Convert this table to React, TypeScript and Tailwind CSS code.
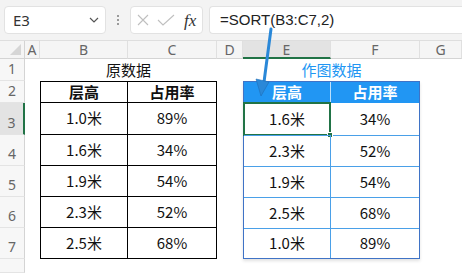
import React from "react";

const cjk = "font-['Noto_Sans_CJK_SC','Noto_Sans',sans-serif]";

const colLetters = ["A", "B", "C", "D", "E", "F", "G"];

const source = [
  ["1.0米", "89%"],
  ["1.6米", "34%"],
  ["1.9米", "54%"],
  ["2.3米", "52%"],
  ["2.5米", "68%"],
];

const sorted = [
  ["1.6米", "34%"],
  ["2.3米", "52%"],
  ["1.9米", "54%"],
  ["2.5米", "68%"],
  ["1.0米", "89%"],
];

// row heights used by both tables (header row + 5 data rows)
const bodyRows = "grid-rows-[21px_32px_31px_31px_31px_1fr]";

function FormulaBar() {
  return (
    <div className="h-[41px] bg-[#f3f3f3] border-b border-[#dedede] flex items-start pt-[6px] pl-[4px] gap-[6px]">
      {/* name box */}
      <div className="w-[102px] h-[28px] bg-white border border-[#e2e2e2] rounded-[4px] flex items-center justify-between pl-[8px] pr-[6px]">
        <span className="font-['Noto_Sans',sans-serif] text-[15px] text-[#333]">E3</span>
        <svg width="10" height="6" viewBox="0 0 10 6">
          <path d="M1 1 L5 5 L9 1" fill="none" stroke="#555" strokeWidth="1.2" />
        </svg>
      </div>
      <div className="w-[12px] h-[28px] flex flex-col items-center justify-center gap-[2px]">
        <span className="w-[2px] h-[2px] bg-[#9a9a9a]" />
        <span className="w-[2px] h-[2px] bg-[#9a9a9a]" />
        <span className="w-[2px] h-[2px] bg-[#9a9a9a]" />
      </div>
      {/* cancel / enter / insert function */}
      <div className="w-[73px] h-[28px] bg-white border border-[#e2e2e2] rounded-[4px] flex items-center pl-[5px] gap-[7px]">
        <svg width="14" height="14" viewBox="0 0 14 14">
          <path d="M2 2 L12 12 M12 2 L2 12" stroke="#bfbfbf" strokeWidth="1.1" />
        </svg>
        <svg width="18" height="14" viewBox="0 0 18 14">
          <path d="M1 7 L6 12 L17 2" fill="none" stroke="#bfbfbf" strokeWidth="1.1" />
        </svg>
        <span className="font-['Liberation_Serif',serif] italic text-[17px] leading-none text-[#333] ml-[2px]">fx</span>
      </div>
      <div className="flex-1 h-[28px] bg-white border border-[#e2e2e2] border-r-0 rounded-l-[4px] flex items-center pl-[10px]">
        <span className="font-['Liberation_Sans',sans-serif] text-[15px] text-[#222]">=SORT(B3:C7,2)</span>
      </div>
    </div>
  );
}

function SourceTable() {
  return (
    <div className={`col-start-3 col-span-2 row-start-3 row-span-6 border border-black grid grid-cols-[87px_1fr] ${bodyRows} ${cjk} text-[15px] text-[#111]`}>
      <div className="border-r border-b border-black flex items-center justify-center font-bold">层高</div>
      <div className="border-b border-black flex items-center justify-center font-bold">占用率</div>
      {source.map(([h, p], i) => (
        <React.Fragment key={i}>
          <div className={`border-r border-black flex items-center justify-center ${i < 4 ? "border-b" : ""}`}>{h}</div>
          <div className={`border-black flex items-center justify-center ${i < 4 ? "border-b" : ""}`}>{p}</div>
        </React.Fragment>
      ))}
    </div>
  );
}

function SortedTable() {
  return (
    <div className={`col-start-6 col-span-2 row-start-3 row-span-6 border border-[#3f73c6] shadow-[0_2px_3px_rgba(0,0,0,0.12)] grid grid-cols-[87px_1fr] ${bodyRows} ${cjk} text-[15px] text-[#111]`}>
      <div className="bg-[#2196f3] border-r border-white/70 flex items-center justify-center font-bold text-white">层高</div>
      <div className="bg-[#2196f3] flex items-center justify-center font-bold text-white">占用率</div>
      {sorted.map(([h, p], i) => (
        <React.Fragment key={i}>
          <div className={`relative border-r border-[#4aa0e8] flex items-center justify-center ${i > 0 ? "border-t" : ""}`}>
            {h}
            {i === 0 && (
              <div className="absolute -left-[1px] -top-[1px] -right-[1px] -bottom-[1px] border-2 border-[#217346]">
                <span className="absolute -right-[4px] -bottom-[4px] w-[6px] h-[6px] bg-[#217346] border border-white" />
              </div>
            )}
          </div>
          <div className={`border-[#4aa0e8] flex items-center justify-center ${i > 0 ? "border-t" : ""}`}>{p}</div>
        </React.Fragment>
      ))}
    </div>
  );
}

export default function App() {
  return (
    <div className="relative w-[462px] h-[273px] overflow-hidden bg-white">
      <FormulaBar />
      <div className="grid grid-cols-[25px_15px_88px_89px_26px_88px_89px_42px] grid-rows-[18px_22px_22px_32px_31px_31px_31px_31px_14px]">
        {/* select-all corner */}
        <div className="row-start-1 col-start-1 bg-[#f5f5f5] border-r border-b border-[#d4d4d4] flex items-end justify-end pr-[3px] pb-[3px]">
          <svg width="11" height="11" viewBox="0 0 11 11">
            <path d="M11 0 L11 11 L0 11 Z" fill="#d6d6d6" />
          </svg>
        </div>
        {colLetters.map((c, i) => (
          <div
            key={c}
            className={`row-start-1 flex items-center justify-center font-['Noto_Sans',sans-serif] text-[14px] text-[#666] border-r border-[#e0e0e0] ${
              c === "E" ? "bg-[#e3e3e3] border-b-2 border-b-[#217346]" : "bg-[#f5f5f5] border-b border-b-[#d4d4d4]"
            }`}
            style={{ gridColumnStart: i + 2 }}
          >
            {c}
          </div>
        ))}
        {[1, 2, 3, 4, 5, 6, 7, 8].map((n) => (
          <div
            key={n}
            className={`col-start-1 flex items-end justify-center pb-[1px] font-['Noto_Sans',sans-serif] text-[14px] text-[#666] border-b border-[#e4e4e4] ${
              n === 3 ? "bg-[#e3e3e3] border-r-2 border-r-[#217346]" : "bg-[#f7f7f7] border-r border-r-[#d4d4d4]"
            }`}
            style={{ gridRowStart: n + 1 }}
          >
            {n < 8 ? n : ""}
          </div>
        ))}
        <div className={`row-start-2 col-start-3 col-span-2 flex items-center justify-center ${cjk} text-[15px] text-[#111]`}>原数据</div>
        <div className={`row-start-2 col-start-6 col-span-2 flex items-center justify-center ${cjk} text-[15px] text-[#2196f3]`}>作图数据</div>
        <SourceTable />
        <SortedTable />
      </div>
      {/* callout arrow from the formula to the result cell */}
      <svg className="absolute left-0 top-0 pointer-events-none" width="462" height="273" viewBox="0 0 462 273">
        <path d="M271 29 L264 82" stroke="#2a88d8" strokeWidth="3" strokeLinecap="round" />
        <path d="M256 79 L269 82 L261 96 Z" fill="#2a88d8" stroke="#1f6fb8" strokeWidth="0.6" />
      </svg>
    </div>
  );
}
